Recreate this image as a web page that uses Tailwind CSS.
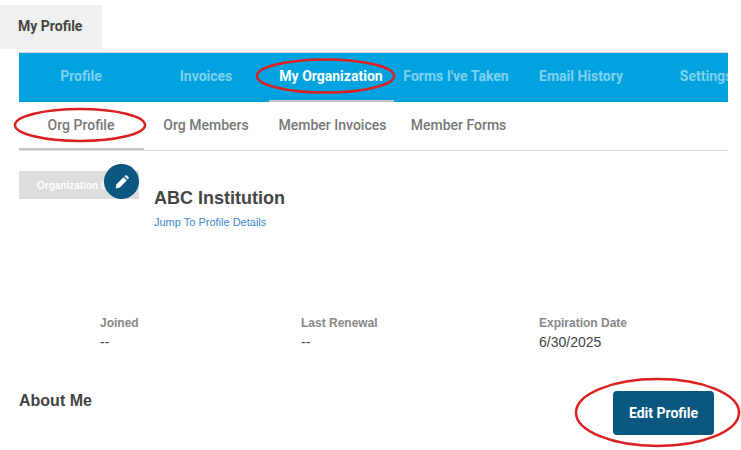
<!DOCTYPE html>
<html lang="en">
<head>
    <meta charset="UTF-8">
    <meta name="viewport" content="width=device-width, initial-scale=1.0">
    <title>My Profile</title>
    <script src="https://cdn.jsdelivr.net/npm/@tailwindcss/browser@4"></script>
</head>
<body class="relative h-[450px] overflow-hidden bg-white font-['Liberation_Sans',sans-serif] text-[#444]">

    <!-- Page title -->
    <div class="mt-[5px] flex h-[44px] w-[102px] items-center bg-[#f0f0f0] pb-[1px] pl-[18px] font-['Roboto',sans-serif] text-[14px] font-bold text-[#444]">My Profile</div>

    <div class="ml-[19px] mt-[3px] w-[709px]">
        <!-- Main tabs -->
        <nav class="flex h-[50px] overflow-hidden border-t border-[#d8d8d8] bg-[#00a3e0] font-['Roboto',sans-serif] text-[14px] font-bold text-white/50">
            <a class="flex h-full w-[125px] shrink-0 items-center justify-center pb-[2px] pr-[1px]">Profile</a>
            <a class="flex h-full w-[125px] shrink-0 items-center justify-center pb-[2px] pr-[1px]">Invoices</a>
            <a class="flex h-full w-[125px] shrink-0 items-center justify-center border-b-2 border-[#c4c4c4] pr-[1px] text-white">My Organization</a>
            <a class="flex h-full w-[125px] shrink-0 items-center justify-center pb-[2px] pr-[1px]">Forms I've Taken</a>
            <a class="flex h-full w-[125px] shrink-0 items-center justify-center pb-[2px] pr-[1px]">Email History</a>
            <a class="flex h-full w-[125px] shrink-0 items-center justify-center pb-[2px] pr-[1px]">Settings</a>
        </nav>

        <!-- Sub tabs -->
        <nav class="flex h-[49px] border-b border-[#ddd] font-['Roboto',sans-serif] text-[14px] font-medium text-[#777]">
            <a class="flex h-[48px] w-[125px] shrink-0 items-center justify-center border-b-2 border-[#c4c4c4] pr-[1px]">Org Profile</a>
            <a class="flex h-[46px] w-[125px] shrink-0 items-center justify-center pr-[1px]">Org Members</a>
            <a class="flex h-[46px] w-[127px] shrink-0 items-center justify-center">Member Invoices</a>
            <a class="flex h-[46px] w-[125px] shrink-0 items-center justify-center">Member Forms</a>
        </nav>

        <!-- Org header -->
        <div class="mt-[20px] flex h-[145px] items-start gap-[15px]">
            <div class="relative flex h-[28px] w-[120px] shrink-0 items-center bg-[#ddd] pl-[18px] text-[10px] font-bold text-white">
                <span>Organization L</span>
                <button class="absolute -top-[7px] left-[85px] flex h-[35px] w-[35px] items-center justify-center rounded-full bg-[#0a5780]">
                    <svg class="h-[14px] w-[14px]" viewBox="0 0 24 24" fill="#fff">
                        <path d="M1 23l1.700-7.200L14.600 3.900l5.500 5.500L8.200 21.300 1 23z"/>
                        <path d="M16.200 2.300l1.300-1.300a2.300 2.300 0 0 1 3.200 0l2.300 2.300a2.300 2.300 0 0 1 0 3.200l-1.300 1.300-5.500-5.500z"/>
                    </svg>
                </button>
            </div>
            <div class="pt-[16px]">
                <h1 class="text-[18px] font-bold leading-[22px] text-[#444]">ABC Institution</h1>
                <a class="mt-[6px] block text-[11px] leading-[14px] text-[#3a87d0]">Jump To Profile Details</a>
            </div>
        </div>

        <!-- Dates -->
        <div class="flex text-[12px] font-bold leading-[14px] text-[#888]">
            <div class="ml-[81px] w-[201px]">
                <div>Joined</div>
                <div class="mt-[4px] text-[14px] font-normal leading-[16px] text-[#444]">--</div>
            </div>
            <div class="w-[238px]">
                <div>Last Renewal</div>
                <div class="mt-[4px] text-[14px] font-normal leading-[16px] text-[#444]">--</div>
            </div>
            <div>
                <div>Expiration Date</div>
                <div class="mt-[4px] text-[14px] font-normal leading-[16px] text-[#444]">6/30/2025</div>
            </div>
        </div>

        <!-- About -->
        <div class="mt-[41px] flex items-start justify-between pr-[14px]">
            <h2 class="text-[16px] font-bold leading-[20px] text-[#444]">About Me</h2>
            <button class="h-[44px] w-[101px] rounded-[4px] bg-[#0a5780] font-['Roboto',sans-serif] text-[14px] font-bold text-white">Edit Profile</button>
        </div>
    </div>

    <!-- Red hand-drawn annotations -->
    <svg class="pointer-events-none absolute left-0 top-0" width="741" height="450" fill="none" stroke="#dc1f1f" stroke-width="2.500">
        <ellipse cx="325.500" cy="76" rx="68.500" ry="16.500"/>
        <ellipse cx="80" cy="125" rx="65" ry="16"/>
        <ellipse cx="657.500" cy="412.500" rx="81.500" ry="33.500"/>
    </svg>

</body>
</html>
